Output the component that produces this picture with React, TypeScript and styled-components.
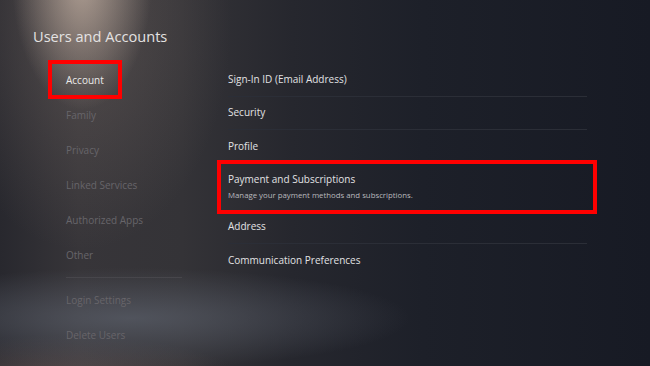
import React from "react";
import styled, { createGlobalStyle } from "styled-components";

const Global = createGlobalStyle`
  html, body { margin: 0; padding: 0; background: #1b1e28; }
  body { font-family: "Open Sans", "Noto Sans", sans-serif; }
`;

const Screen = styled.div`
  position: relative;
  width: 650px;
  height: 366px;
  overflow: hidden;
  background:
    radial-gradient(ellipse 70px 130px at 82px -20px, rgba(205, 185, 170, 0.75), rgba(205, 185, 170, 0) 100%),
    radial-gradient(ellipse 150px 230px at 82px 20px, rgba(125, 112, 106, 0.4), rgba(125, 112, 106, 0) 100%),
    radial-gradient(ellipse 280px 50px at 130px 318px, rgba(92, 97, 108, 0.7), rgba(92, 97, 108, 0) 100%),
    radial-gradient(ellipse 180px 42px at 60px 378px, rgba(105, 90, 88, 0.6), rgba(105, 90, 88, 0) 100%),
    linear-gradient(90deg, #28282e 0%, #373539 12%, #343337 28%, #26272e 45%, #1d2029 65%, #171a24 100%);
  display: flex;
  flex-direction: column;
`;

const Title = styled.h1`
  margin: 0;
  padding: 26px 0 0 33px;
  height: 37px;
  box-sizing: border-box;
  font-size: 14.6px;
  font-weight: 400;
  color: #e4e2e2;
  line-height: 20px;
`;

const Main = styled.div`
  display: flex;
  padding: 25px 0 0 50px;
`;

const Nav = styled.nav`
  width: 178px;
  display: flex;
  flex-direction: column;
  align-items: flex-start;
`;

const NavItem = styled.div<{ $active?: boolean }>`
  height: 35px;
  padding: 0 16px;
  display: flex;
  align-items: center;
  font-size: 10px;
  color: ${(p) => (p.$active ? "#ecebeb" : "#67656a")};
  outline: ${(p) => (p.$active ? "4px solid #ff0000" : "none")};
  outline-offset: -2px;
`;

const NavDivider = styled.div`
  width: 116px;
  height: 1px;
  margin: 5px 0 4px 16px;
  background: #47464b;
`;

const Content = styled.div`
  width: 359px;
  display: flex;
  flex-direction: column;
  padding-top: 1px;
`;

const Row = styled.div<{ $tall?: boolean; $focus?: boolean; $last?: boolean }>`
  position: relative;
  height: ${(p) => (p.$tall ? "47px" : "33.5px")};
  display: flex;
  flex-direction: column;
  justify-content: center;
  gap: 4px;
  border-bottom: 1px solid ${(p) => (p.$last ? "transparent" : p.$focus ? "#565a63" : "#2b2e37")};
  box-sizing: border-box;
  &::after {
    content: "";
    display: ${(p) => (p.$focus ? "block" : "none")};
    position: absolute;
    top: -4px;
    left: -11px;
    right: -10px;
    bottom: -4px;
    border: 4px solid #ff0000;
    pointer-events: none;
  }
`;

const RowTitle = styled.div`
  font-size: 10px;
  color: #e2e2e4;
  line-height: 13px;
`;

const RowSub = styled.div`
  font-size: 7.8px;
  color: #b9b9be;
  line-height: 10px;
`;

const navTop = ["Account", "Family", "Privacy", "Linked Services", "Authorized Apps", "Other"];
const navBottom = ["Login Settings", "Delete Users"];

export default function App() {
  return (
    <>
      <Global />
      <Screen>
        <Title>Users and Accounts</Title>
        <Main>
          <Nav>
            {navTop.map((n, i) => (
              <NavItem key={n} $active={i === 0}>
                {n}
              </NavItem>
            ))}
            <NavDivider />
            {navBottom.map((n) => (
              <NavItem key={n}>{n}</NavItem>
            ))}
          </Nav>
          <Content>
            <Row>
              <RowTitle>Sign-In ID (Email Address)</RowTitle>
            </Row>
            <Row>
              <RowTitle>Security</RowTitle>
            </Row>
            <Row>
              <RowTitle>Profile</RowTitle>
            </Row>
            <Row $tall $focus>
              <RowTitle>Payment and Subscriptions</RowTitle>
              <RowSub>Manage your payment methods and subscriptions.</RowSub>
            </Row>
            <Row>
              <RowTitle>Address</RowTitle>
            </Row>
            <Row $last>
              <RowTitle>Communication Preferences</RowTitle>
            </Row>
          </Content>
        </Main>
      </Screen>
    </>
  );
}
